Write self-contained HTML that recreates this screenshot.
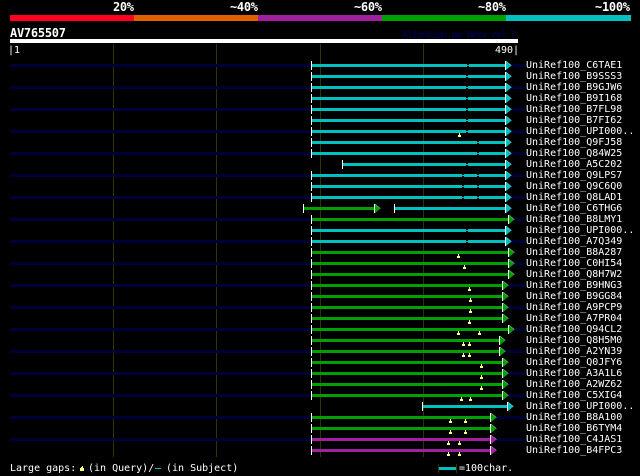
<!DOCTYPE html>
<html><head><meta charset="utf-8"><style>
html,body{margin:0;padding:0;background:#000;width:640px;height:476px;overflow:hidden}
svg{display:block}
text{font-family:"DejaVu Sans Mono","Liberation Mono",monospace;font-size:10px;fill:#fff}
.b{font-weight:bold;font-size:12px}
.l{font-size:10px}
</style></head><body>
<svg width="640" height="476" viewBox="0 0 640 476" xmlns="http://www.w3.org/2000/svg" shape-rendering="crispEdges">
<defs>
<path id="y" fill="#ffff80" d="M1 2h1v2h1v2H0V4h1z"/>
<path id="g" fill="#000" d="M0-1h2v1H0zM0 1h2v1H0z"/>
<rect id="s" fill="#fff" x="0" y="-4" width="1" height="9"/>
<g id="a"><path shape-rendering="auto" d="M1-4L6.5 .5 1 5z"/><path shape-rendering="auto" fill="none" stroke="#fff" stroke-width=".4" d="M1-4L6.5 .5"/><rect fill="#fff" x="0" y="-4" width="1" height="9"/></g>
</defs>
<rect width="640" height="476" fill="#000"/>
<text class="b" x="113" y="11" textLength="21">20%</text>
<text class="b" x="230" y="11" textLength="28">~40%</text>
<text class="b" x="354" y="11" textLength="28">~60%</text>
<text class="b" x="478" y="11" textLength="28">~80%</text>
<text class="b" x="595" y="11" textLength="35">~100%</text>
<rect x="10" y="15" width="124" height="6" fill="#ff0020"/>
<rect x="134" y="15" width="124" height="6" fill="#e06000"/>
<rect x="258" y="15" width="124" height="6" fill="#a020a0"/>
<rect x="382" y="15" width="124" height="6" fill="#00a000"/>
<rect x="506" y="15" width="125" height="6" fill="#00c0c0"/>
<text class="b" x="10" y="37" textLength="56">AV765507</text>
<text class="b" x="402" y="38" textLength="115" style="fill:#000040;font-size:10px">AlignView.pm Beta rel.7</text>
<rect x="10" y="39" width="508" height="4" fill="#fff"/>
<text x="8" y="53">|1</text>
<text x="495" y="53">490|</text>
<path fill="#333300" d="M113 44h1v413h-1zM216 44h1v413h-1zM320 44h1v413h-1zM423 44h1v413h-1z"/>
<path fill="#000038" d="M10 64h515v3H10zM10 86h515v3H10zM10 108h515v3H10zM10 130h515v3H10zM10 152h515v3H10zM10 174h515v3H10zM10 196h515v3H10zM10 218h515v3H10zM10 240h515v3H10zM10 262h515v3H10zM10 284h515v3H10zM10 306h515v3H10zM10 328h515v3H10zM10 350h515v3H10zM10 372h515v3H10zM10 394h515v3H10zM10 416h515v3H10zM10 438h515v3H10z"/>

<g transform="translate(0,65)" fill="#00c0c0"><path d="M312-1H505v3H312z"/><use href="#g" x="467"/><use href="#a" x="505"/><use href="#s" x="311"/><text class="l" x="526" y="3">UniRef100_C6TAE1</text></g>
<g transform="translate(0,76)" fill="#00c0c0"><path d="M312-1H505v3H312z"/><use href="#g" x="466"/><use href="#a" x="505"/><use href="#s" x="311"/><text class="l" x="526" y="3">UniRef100_B9SSS3</text></g>
<g transform="translate(0,87)" fill="#00c0c0"><path d="M312-1H505v3H312z"/><use href="#g" x="466"/><use href="#a" x="505"/><use href="#s" x="311"/><text class="l" x="526" y="3">UniRef100_B9GJW6</text></g>
<g transform="translate(0,98)" fill="#00c0c0"><path d="M312-1H505v3H312z"/><use href="#g" x="466"/><use href="#a" x="505"/><use href="#s" x="311"/><text class="l" x="526" y="3">UniRef100_B9I168</text></g>
<g transform="translate(0,109)" fill="#00c0c0"><path d="M312-1H505v3H312z"/><use href="#g" x="466"/><use href="#a" x="505"/><use href="#s" x="311"/><text class="l" x="526" y="3">UniRef100_B7FL98</text></g>
<g transform="translate(0,120)" fill="#00c0c0"><path d="M312-1H505v3H312z"/><use href="#g" x="466"/><use href="#a" x="505"/><use href="#s" x="311"/><text class="l" x="526" y="3">UniRef100_B7FI62</text></g>
<g transform="translate(0,131)" fill="#00c0c0"><path d="M312-1H505v3H312z"/><use href="#g" x="466"/><use href="#a" x="505"/><use href="#s" x="311"/><use href="#y" x="458"/><text class="l" x="526" y="3">UniRef100_UPI000..</text></g>
<g transform="translate(0,142)" fill="#00c0c0"><path d="M312-1H505v3H312z"/><use href="#g" x="477"/><use href="#a" x="505"/><use href="#s" x="311"/><text class="l" x="526" y="3">UniRef100_Q9FJ58</text></g>
<g transform="translate(0,153)" fill="#00c0c0"><path d="M312-1H505v3H312z"/><use href="#g" x="477"/><use href="#a" x="505"/><use href="#s" x="311"/><text class="l" x="526" y="3">UniRef100_Q84W25</text></g>
<g transform="translate(0,164)" fill="#00c0c0"><path d="M343-1H505v3H343z"/><use href="#g" x="466"/><use href="#a" x="505"/><use href="#s" x="342"/><text class="l" x="526" y="3">UniRef100_A5C202</text></g>
<g transform="translate(0,175)" fill="#00c0c0"><path d="M312-1H505v3H312z"/><use href="#g" x="462"/><use href="#g" x="477"/><use href="#a" x="505"/><use href="#s" x="311"/><text class="l" x="526" y="3">UniRef100_Q9LPS7</text></g>
<g transform="translate(0,186)" fill="#00c0c0"><path d="M312-1H505v3H312z"/><use href="#g" x="462"/><use href="#g" x="477"/><use href="#a" x="505"/><use href="#s" x="311"/><text class="l" x="526" y="3">UniRef100_Q9C6Q0</text></g>
<g transform="translate(0,197)" fill="#00c0c0"><path d="M312-1H505v3H312z"/><use href="#g" x="462"/><use href="#g" x="477"/><use href="#a" x="505"/><use href="#s" x="311"/><text class="l" x="526" y="3">UniRef100_Q8LAD1</text></g>
<g transform="translate(0,208)" fill="#00c0c0"><path d="M395-1H505v3H395z"/><use href="#a" x="505"/><use href="#s" x="394"/><g fill="#00a000"><path d="M304-1H374v3H304z"/><use href="#a" x="374"/><use href="#s" x="303"/></g><text class="l" x="526" y="3">UniRef100_C6THG6</text></g>
<g transform="translate(0,219)" fill="#00a000"><path d="M312-1H508v3H312z"/><use href="#a" x="508"/><use href="#s" x="311"/><text class="l" x="526" y="3">UniRef100_B8LMY1</text></g>
<g transform="translate(0,230)" fill="#00c0c0"><path d="M312-1H505v3H312z"/><use href="#g" x="466"/><use href="#a" x="505"/><use href="#s" x="311"/><text class="l" x="526" y="3">UniRef100_UPI000..</text></g>
<g transform="translate(0,241)" fill="#00c0c0"><path d="M312-1H505v3H312z"/><use href="#g" x="466"/><use href="#a" x="505"/><use href="#s" x="311"/><text class="l" x="526" y="3">UniRef100_A7Q349</text></g>
<g transform="translate(0,252)" fill="#00a000"><path d="M312-1H508v3H312z"/><use href="#a" x="508"/><use href="#s" x="311"/><use href="#y" x="457"/><text class="l" x="526" y="3">UniRef100_B8A287</text></g>
<g transform="translate(0,263)" fill="#00a000"><path d="M312-1H508v3H312z"/><use href="#a" x="508"/><use href="#s" x="311"/><use href="#y" x="463"/><text class="l" x="526" y="3">UniRef100_C0HI54</text></g>
<g transform="translate(0,274)" fill="#00a000"><path d="M312-1H508v3H312z"/><use href="#a" x="508"/><use href="#s" x="311"/><text class="l" x="526" y="3">UniRef100_Q8H7W2</text></g>
<g transform="translate(0,285)" fill="#00a000"><path d="M312-1H502v3H312z"/><use href="#a" x="502"/><use href="#s" x="311"/><use href="#y" x="468"/><text class="l" x="526" y="3">UniRef100_B9HNG3</text></g>
<g transform="translate(0,296)" fill="#00a000"><path d="M312-1H502v3H312z"/><use href="#a" x="502"/><use href="#s" x="311"/><use href="#y" x="469"/><text class="l" x="526" y="3">UniRef100_B9GG84</text></g>
<g transform="translate(0,307)" fill="#00a000"><path d="M312-1H502v3H312z"/><use href="#a" x="502"/><use href="#s" x="311"/><use href="#y" x="469"/><text class="l" x="526" y="3">UniRef100_A9PCP9</text></g>
<g transform="translate(0,318)" fill="#00a000"><path d="M312-1H502v3H312z"/><use href="#a" x="502"/><use href="#s" x="311"/><use href="#y" x="468"/><text class="l" x="526" y="3">UniRef100_A7PR04</text></g>
<g transform="translate(0,329)" fill="#00a000"><path d="M312-1H508v3H312z"/><use href="#a" x="508"/><use href="#s" x="311"/><use href="#y" x="457"/><use href="#y" x="478"/><text class="l" x="526" y="3">UniRef100_Q94CL2</text></g>
<g transform="translate(0,340)" fill="#00a000"><path d="M312-1H499v3H312z"/><use href="#a" x="499"/><use href="#s" x="311"/><use href="#y" x="462"/><use href="#y" x="468"/><text class="l" x="526" y="3">UniRef100_Q8H5M0</text></g>
<g transform="translate(0,351)" fill="#00a000"><path d="M312-1H499v3H312z"/><use href="#a" x="499"/><use href="#s" x="311"/><use href="#y" x="462"/><use href="#y" x="468"/><text class="l" x="526" y="3">UniRef100_A2YN39</text></g>
<g transform="translate(0,362)" fill="#00a000"><path d="M312-1H502v3H312z"/><use href="#a" x="502"/><use href="#s" x="311"/><use href="#y" x="480"/><text class="l" x="526" y="3">UniRef100_Q0JFY6</text></g>
<g transform="translate(0,373)" fill="#00a000"><path d="M312-1H502v3H312z"/><use href="#a" x="502"/><use href="#s" x="311"/><use href="#y" x="480"/><text class="l" x="526" y="3">UniRef100_A3A1L6</text></g>
<g transform="translate(0,384)" fill="#00a000"><path d="M312-1H502v3H312z"/><use href="#a" x="502"/><use href="#s" x="311"/><use href="#y" x="480"/><text class="l" x="526" y="3">UniRef100_A2WZ62</text></g>
<g transform="translate(0,395)" fill="#00a000"><path d="M312-1H502v3H312z"/><use href="#a" x="502"/><use href="#s" x="311"/><use href="#y" x="460"/><use href="#y" x="469"/><text class="l" x="526" y="3">UniRef100_C5XIG4</text></g>
<g transform="translate(0,406)" fill="#00c0c0"><path d="M423-1H507v3H423z"/><use href="#a" x="507"/><use href="#s" x="422"/><text class="l" x="526" y="3">UniRef100_UPI000..</text></g>
<g transform="translate(0,417)" fill="#00a000"><path d="M312-1H490v3H312z"/><use href="#a" x="490"/><use href="#s" x="311"/><use href="#y" x="449"/><use href="#y" x="464"/><text class="l" x="526" y="3">UniRef100_B8A100</text></g>
<g transform="translate(0,428)" fill="#00a000"><path d="M312-1H490v3H312z"/><use href="#a" x="490"/><use href="#s" x="311"/><use href="#y" x="449"/><use href="#y" x="464"/><text class="l" x="526" y="3">UniRef100_B6TYM4</text></g>
<g transform="translate(0,439)" fill="#a020a0"><path d="M312-1H490v3H312z"/><use href="#a" x="490"/><use href="#s" x="311"/><use href="#y" x="447"/><use href="#y" x="458"/><text class="l" x="526" y="3">UniRef100_C4JAS1</text></g>
<g transform="translate(0,450)" fill="#a020a0"><path d="M312-1H490v3H312z"/><use href="#a" x="490"/><use href="#s" x="311"/><use href="#y" x="447"/><use href="#y" x="458"/><text class="l" x="526" y="3">UniRef100_B4FPC3</text></g>

<text x="10" y="471">Large gaps:</text>
<path fill="#ffff80" d="M82 466h1v2h1v3h-4v-3h1v-1h1z"/>
<text x="88" y="471">(in Query)/</text>
<rect x="155" y="468" width="6" height="1" fill="#00c0c0"/>
<text x="166" y="471">(in Subject)</text>
<path fill="#333300" d="M438 464h1v9h-1zM456 464h1v9h-1z"/>
<rect x="439" y="467" width="17" height="3" fill="#00c0c0"/>
<text x="459" y="471">=100char.</text>
</svg>
</body></html>
